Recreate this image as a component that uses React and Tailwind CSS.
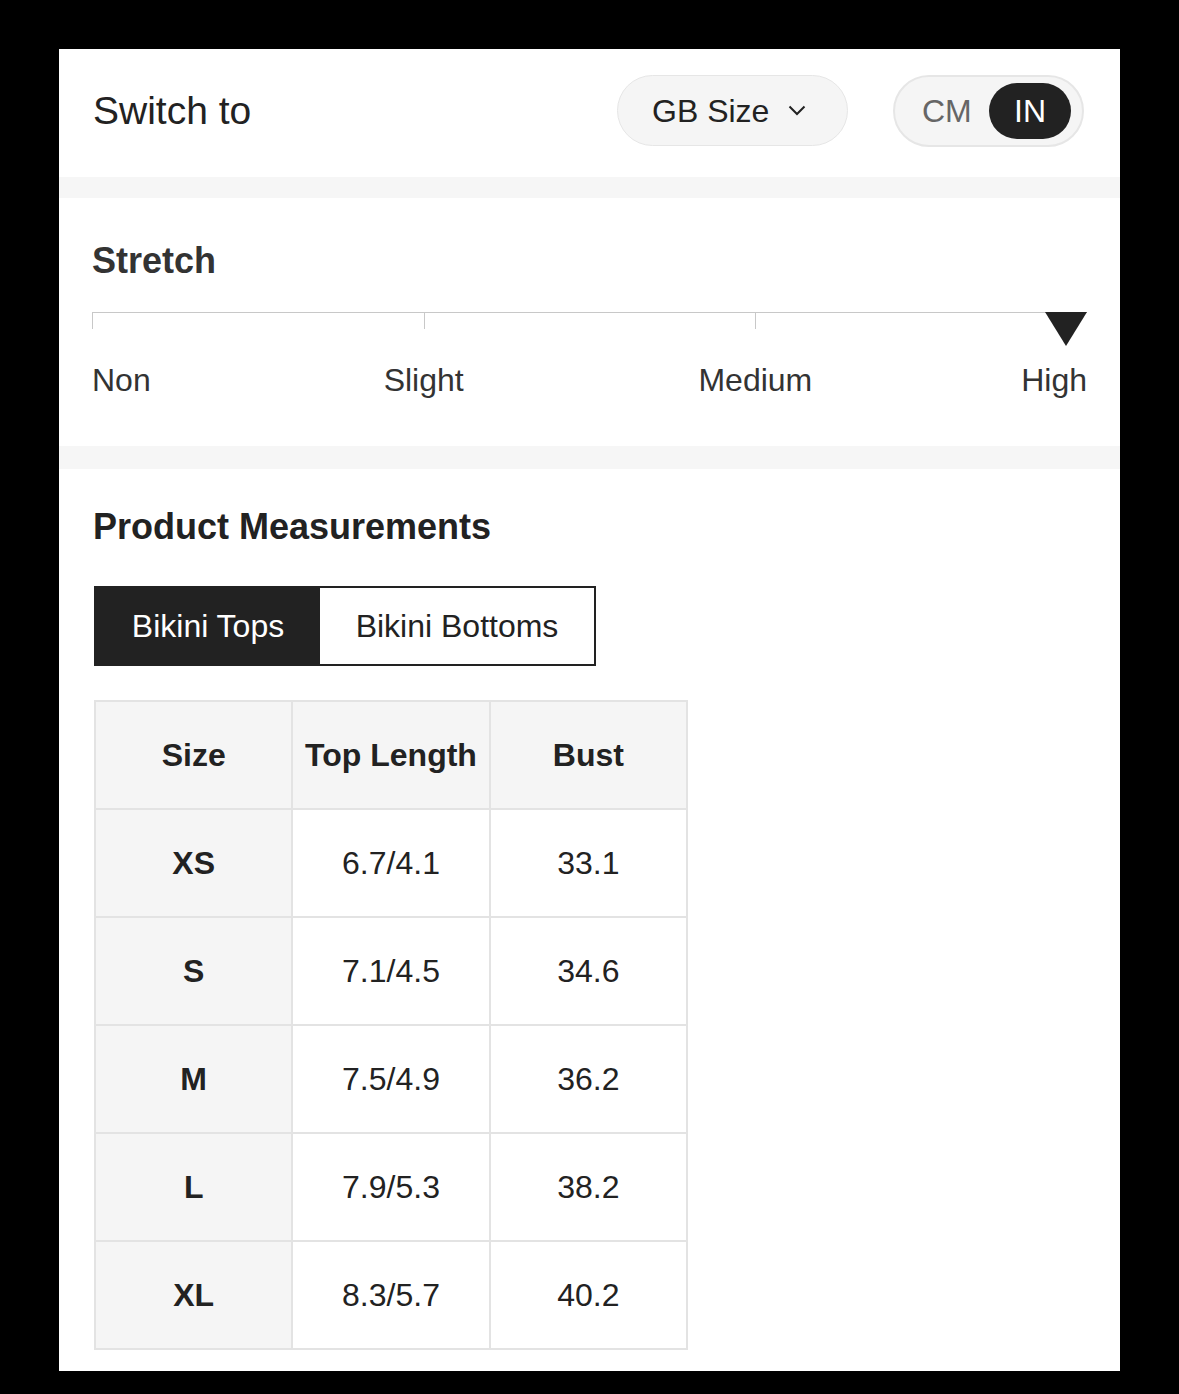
import React from 'react';

const rows = [
  { size: 'XS', top: '6.7/4.1', bust: '33.1' },
  { size: 'S', top: '7.1/4.5', bust: '34.6' },
  { size: 'M', top: '7.5/4.9', bust: '36.2' },
  { size: 'L', top: '7.9/5.3', bust: '38.2' },
  { size: 'XL', top: '8.3/5.7', bust: '40.2' },
];

const SizeGuide = () => {
  return (
    <div className="min-h-screen bg-black pt-[49px] pb-[24px] font-['Liberation_Sans',Arial,sans-serif] text-[#222]">
      <div className="mx-auto w-[1061px] bg-white">
        {/* Switch to */}
        <div className="flex h-[128px] items-center pb-[5px] pl-[34px] pr-[36px]">
          <div className="flex-1 text-[39px] leading-none">Switch to</div>
          <button className="flex h-[71px] w-[231px] items-center rounded-full border border-[#e6e6e6] bg-[#f5f5f5] pl-[34px] text-[32px] leading-none text-[#222]">
            GB Size
            <svg width="18" height="11" viewBox="0 0 18 11" className="ml-[19px]">
              <polyline points="1.5,1.5 9,9 16.5,1.5" fill="none" stroke="#222" strokeWidth="2" />
            </svg>
          </button>
          <div className="ml-[45px] flex h-[72px] w-[191px] items-center rounded-full border-2 border-[#e6e6e6] bg-[#f5f5f5] pl-[27px] pr-[11px]">
            <span className="text-[32px] leading-none text-[#666]">CM</span>
            <span className="ml-auto flex h-[56px] w-[82px] items-center justify-center rounded-full bg-[#222] text-[32px] leading-none text-white">IN</span>
          </div>
        </div>

        <div className="h-[21px] bg-[#f6f6f6]" />

        {/* Stretch */}
        <div className="px-[33px] pt-[45px] pb-[50px]">
          <h2 className="text-[36px] font-bold leading-none text-[#333]">Stretch</h2>
          <div className="relative mt-[33px]">
            <div className="h-px bg-[#c8c8c8]" />
            <div className="flex">
              <div className="h-[16px] w-1/3 border-l border-[#c8c8c8]" />
              <div className="h-[16px] w-1/3 border-l border-[#c8c8c8]" />
              <div className="h-[16px] w-1/3 border-l border-[#c8c8c8]" />
            </div>
            <svg width="42" height="34" viewBox="0 0 42 34" className="absolute right-0 top-0">
              <polygon points="0,0 42,0 21,34" fill="#222" />
            </svg>
          </div>
          <div className="mt-[35px] grid grid-cols-6 text-[32px] leading-none text-[#333]">
            <div className="text-left">Non</div>
            <div className="col-span-2 text-center">Slight</div>
            <div className="col-span-2 text-center">Medium</div>
            <div className="text-right">High</div>
          </div>
        </div>

        <div className="h-[23px] bg-[#f6f6f6]" />

        {/* Product Measurements */}
        <div className="px-[34px] pt-[40px] pb-[21px]">
          <h2 className="text-[36px] font-bold leading-none text-[#222]">Product Measurements</h2>
          <div className="mt-[41px] ml-px flex h-[80px] w-[502px] border-2 border-[#222] text-[32px] leading-none">
            <div className="flex w-[224px] items-center justify-center bg-[#222] text-white">Bikini Tops</div>
            <div className="flex flex-1 items-center justify-center bg-white text-[#222]">Bikini Bottoms</div>
          </div>
          <table className="mt-[34px] ml-px w-[594px] table-fixed border-collapse border-2 border-[#e3e3e3] text-[32px] leading-none">
            <thead>
              <tr className="h-[108px] bg-[#f5f5f5]">
                <th className="border-2 border-[#e3e3e3] font-bold">Size</th>
                <th className="border-2 border-[#e3e3e3] font-bold">Top Length</th>
                <th className="border-2 border-[#e3e3e3] font-bold">Bust</th>
              </tr>
            </thead>
            <tbody>
              {rows.map((r) => (
                <tr key={r.size} className="h-[108px]">
                  <td className="border-2 border-[#e3e3e3] bg-[#f5f5f5] text-center font-bold">{r.size}</td>
                  <td className="border-2 border-[#e3e3e3] bg-white text-center">{r.top}</td>
                  <td className="border-2 border-[#e3e3e3] bg-white text-center">{r.bust}</td>
                </tr>
              ))}
            </tbody>
          </table>
        </div>
      </div>
    </div>
  );
};

export default function App() {
  return <SizeGuide />;
}
